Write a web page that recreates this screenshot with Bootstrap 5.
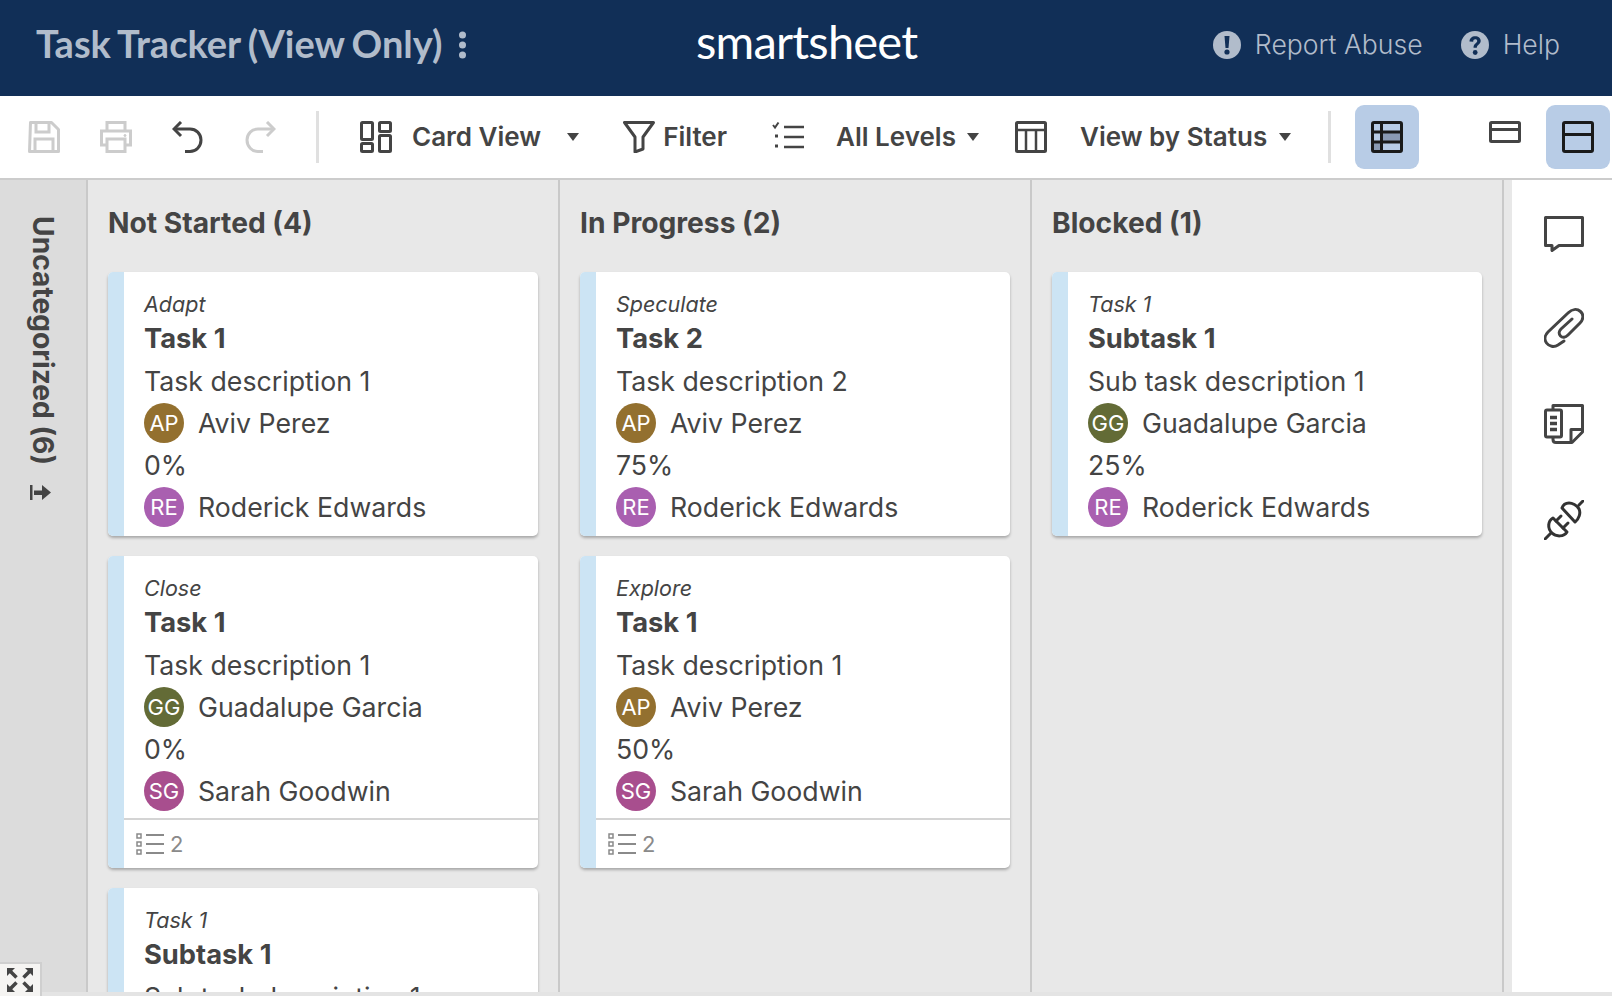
<!DOCTYPE html>
<html lang="en">
<head>
  <meta charset="UTF-8">
  <title>Task Tracker (View Only)</title>
  <meta name="viewport" content="width=device-width, initial-scale=1.0">
  <link href="https://cdn.jsdelivr.net/npm/bootstrap@5.3.3/dist/css/bootstrap.min.css" rel="stylesheet">
  <style>
    html, body { height: 100%; }
    body { background: #fff; color: #444; font-family: Inter, "Liberation Sans", sans-serif; overflow: hidden; }

    .app-header { height: 96px; padding-bottom: 6px; background: #112f57; color: #b1bccb; }
    .sheet-title { width: 696px; padding-left: 36px; font: 700 38px Lato, sans-serif; word-spacing: -2px; }
    .sheet-title span { margin-top: -4px; }
    .kebab { margin-left: 16px; }
    .logo-text { color: #fff; font: 400 47px/1 Lato, sans-serif; letter-spacing: -.8px; margin-top: -8px; }
    .head-links { padding-right: 52px; font-size: 26.6px; font-weight: 300; gap: 38px; }
    .head-link { gap: 14px; }

    .tool-bar { height: 84px; padding-left: 28px; border-bottom: 2px solid #ccc; font-size: 26px; font-weight: 600; }
    .tool-bar svg { flex: none; }
    .tool-text { margin-top: -2px; }
    .ml-40 { margin-left: 40px; }
    .tool-sep { width: 3px; height: 52px; background: #e0e0e0; margin-left: 40px; }
    .ml-cardview { margin-left: 41px; }
    .ml-20 { margin-left: 20px; }
    .ml-26 { margin-left: 26px; }
    .ml-filter { margin-left: 44px; }
    .ml-8 { margin-left: 8px; }
    .ml-list { margin-left: 45px; }
    .ml-32 { margin-left: 32px; }
    .ml-33 { margin-left: 33px; }
    .ml-11 { margin-left: 11px; }
    .ml-table { margin-left: 36px; }
    .ml-12 { margin-left: 12px; }
    .ml-37 { margin-left: 37px; }
    .ml-rows { margin-left: 70px; }
    .ml-24 { margin-left: 24px; }
    .ml-25 { margin-left: 25px; }
    .tool-on { width: 64px; height: 64px; border-radius: 9px; background: #b8cce6; }
    .caret-down { width: 0; height: 0; border-left: 6px solid transparent; border-right: 6px solid transparent; border-top: 8px solid #444; }
    .row-icon { margin-top: -10px; }

    .board { height: 812px; overflow: hidden; }
    .side-lane { width: 86px; background: #dcdcdc; padding-top: 36px; font-size: 28.2px; font-weight: 700; }
    .side-label { writing-mode: vertical-rl; line-height: 1; }
    .side-arrow { margin-top: 20px; margin-right: 6px; }
    .lane { width: 472px; background: #e8e8e8; border-left: 2px solid #c9c9c9; padding-left: 20px; }
    .lane-end { width: 10px; background: #e8e8e8; border-left: 2px solid #c9c9c9; }
    .lane-title { height: 92px; padding-bottom: 4px; font-size: 28.2px; font-weight: 700; margin: 0; }
    .task-card { width: 430px; margin-bottom: 20px; border-radius: 5px; box-shadow: 0 2px 3px rgba(0,0,0,.28); overflow: hidden; color: #444; }
    .task-bar { width: 16px; background: #cce4f4; flex: none; }
    .task-body { padding: 18px 10px 8px 20px; font-size: 26.7px; line-height: 42px; }
    .with-foot .task-body { padding-bottom: 6px; }
    .task-cat { font-size: 21.5px; font-style: italic; line-height: 28px; }
    .task-name { font-size: 27.3px; font-weight: 700; line-height: 42px; }
    .person { gap: 14px; height: 42px; }
    .avatar { width: 40px; height: 40px; border-radius: 50%; color: #fff; font-size: 22px; line-height: 40px; text-align: center; flex: none; }
    .av-ap { background: #93702f; }
    .av-re { background: #a95fb0; }
    .av-gg { background: #636b36; }
    .av-sg { background: #a84e8e; }
    .task-foot { height: 50px; border-top: 2px solid #d4d4d4; padding-left: 12px; color: #8a8a8a; font-size: 22px; gap: 6px; }

    .side-panel { width: 100px; background: #fff; padding: 32px 0 0 32px; gap: 56px; }

    .scroll-strip { height: 4px; background: #e4e4e4; }
    .expand-box { position: absolute; left: 0; top: 962px; width: 42px; height: 34px; background: #f5f4f2; border: 2px solid #cfcfcf; border-left: 0; border-bottom: 0; }
  </style>
</head>
<body>

<header class="app-header d-flex align-items-center">
  <div class="sheet-title d-flex align-items-center">
    <span>Task Tracker (View Only)</span>
    <svg class="kebab" width="9" height="28" viewBox="0 0 9 28"><g fill="#b1bccb"><circle cx="4.5" cy="4" r="3.5"/><circle cx="4.5" cy="14" r="3.5"/><circle cx="4.5" cy="24" r="3.5"/></g></svg>
  </div>
  <div class="logo-text">smartsheet</div>
  <div class="head-links ms-auto d-flex align-items-center">
    <div class="head-link d-flex align-items-center">
      <svg width="28" height="28" viewBox="0 0 28 28"><circle cx="14" cy="14" r="14" fill="#b1bccb"/><path d="M11.5 5h5l-1 12h-3z" fill="#112f57"/><circle cx="14" cy="21" r="2.600" fill="#112f57"/></svg>
      <span>Report Abuse</span>
    </div>
    <div class="head-link d-flex align-items-center">
      <svg width="28" height="28" viewBox="0 0 28 28"><circle cx="14" cy="14" r="14" fill="#b1bccb"/><path d="M8.500 10.500c0-3.300 2.500-5.300 5.700-5.300s5.500 1.900 5.500 4.600c0 3.900-3.900 3.800-3.900 7h-3.300c0-4.600 3.700-4.600 3.700-6.800 0-1.100-.8-1.700-1.900-1.700-1.300 0-2 .8-2.100 2.400z" fill="#112f57"/><circle cx="14.200" cy="21.500" r="2.400" fill="#112f57"/></svg>
      <span>Help</span>
    </div>
  </div>
</header>

<nav class="tool-bar d-flex align-items-center">
  <svg width="32" height="32" viewBox="0 0 32 32" fill="none" stroke="#ccc" stroke-width="3"><path d="M2.500 1.500h21l7 7v22h-29z" stroke-linejoin="round"/><path d="M8 2v9h13V2M7 31V18h18v13"/></svg>
  <svg class="ml-40" width="32" height="32" viewBox="0 0 32 32" fill="none" stroke="#ccc" stroke-width="3"><path d="M7 10V1.500h18V10M7 24H1.500V10h29v14H25"/><path d="M7 18h18v12.500H7z"/><circle cx="25" cy="14.500" r="1" fill="#ccc" stroke-width="1"/></svg>
  <svg class="ml-40" width="32" height="32" viewBox="0 0 32 32" fill="none" stroke="#444" stroke-width="3"><path d="M9 1 2 8l7 7"/><path d="M3 8h15c6 0 11 4.500 11 11s-5 11.500-11 11.500h-5"/></svg>
  <svg class="ml-40" width="32" height="32" viewBox="0 0 32 32" fill="none" stroke="#ccc" stroke-width="3"><path d="m23 1 7 7-7 7"/><path d="M29 8H14C8 8 3 12.500 3 19s5 11.500 11 11.500h5"/></svg>
  <div class="tool-sep"></div>
  <svg class="ml-cardview" width="32" height="32" viewBox="0 0 32 32" fill="none" stroke="#444" stroke-width="3"><rect x="1.500" y="1.500" width="11" height="17" rx="1"/><rect x="19.500" y="1.500" width="11" height="9" rx="1"/><rect x="1.500" y="22.500" width="11" height="8" rx="1"/><rect x="19.500" y="14.500" width="11" height="16" rx="1"/></svg>
  <span class="ml-20 tool-text">Card View</span>
  <span class="caret-down ml-26"></span>
  <svg class="ml-filter" width="32" height="32" viewBox="0 0 32 32" fill="none" stroke="#444" stroke-width="3" stroke-linejoin="round"><path d="M1.500 1.500h29L20 16v12l-8 3V16z"/></svg>
  <span class="ml-8 tool-text">Filter</span>
  <svg class="ml-list" width="32" height="32" viewBox="0 0 32 32" fill="none" stroke="#444" stroke-width="2.500"><path d="M12 6h20M12 16h20M12 26h20"/><path d="m1 4 2 2.500L6.500 1.500" stroke-width="2"/><path d="M3 15h3M3 25h3" stroke-width="3"/></svg>
  <span class="ml-32 tool-text">All Levels</span>
  <span class="caret-down ml-11"></span>
  <svg class="ml-table" width="32" height="32" viewBox="0 0 32 32" fill="none" stroke="#444" stroke-width="3"><rect x="1.500" y="1.500" width="29" height="29" rx="1"/><path d="M1.500 9h29M11 9v21M21 9v21" stroke-width="2.500"/></svg>
  <span class="ml-33 tool-text">View by Status</span>
  <span class="caret-down ml-12"></span>
  <div class="tool-sep ml-37"></div>
  <button class="tool-on btn p-0 border-0 d-flex align-items-center justify-content-center ml-24" type="button" aria-label="Grid">
    <svg width="32" height="32" viewBox="0 0 32 32" fill="none"><path d="M11 11h20v10H11zM2 21h9v9H2z" fill="#8a9ab3"/><rect x="1.500" y="1.500" width="29" height="29" rx="1.500" stroke="#1a1a1a" stroke-width="3"/><path d="M1.500 11h29M1.500 21h29M10.500 1.500v29" stroke="#1a1a1a" stroke-width="3"/></svg>
  </button>
  <svg class="row-icon ml-rows" width="32" height="22" viewBox="0 0 32 22" fill="none" stroke="#444" stroke-width="3"><rect x="1.500" y="1.500" width="29" height="19" rx="1"/><path d="M1.500 8.500h29"/></svg>
  <button class="tool-on btn p-0 border-0 d-flex align-items-center justify-content-center ml-25" type="button" aria-label="Split">
    <svg width="32" height="32" viewBox="0 0 32 32" fill="none" stroke="#1a1a1a" stroke-width="3"><rect x="1.500" y="1.500" width="29" height="29" rx="1.500"/><path d="M1.500 13.500h29"/></svg>
  </button>
</nav>

<main class="board d-flex">
  <aside class="side-lane d-flex flex-column align-items-center">
    <span class="side-label">Uncategorized (6)</span>
    <svg class="side-arrow" width="21" height="15" viewBox="0 0 21 15" fill="#444"><rect width="2.500" height="15"/><rect x="4" y="5.500" width="10" height="4.500"/><path d="M12 0l9 7.500-9 7.500z"/></svg>
  </aside>

  <section class="lane">
    <h2 class="lane-title d-flex align-items-center">Not Started (4)</h2>

    <article class="card task-card border-0 flex-row">
      <div class="task-bar"></div>
      <div class="flex-grow-1">
        <div class="task-body">
          <div class="task-cat">Adapt</div>
          <div class="task-name">Task 1</div>
          <div>Task description 1</div>
          <div class="person d-flex align-items-center"><span class="avatar av-ap">AP</span>Aviv Perez</div>
          <div>0%</div>
          <div class="person d-flex align-items-center"><span class="avatar av-re">RE</span>Roderick Edwards</div>
        </div>
      </div>
    </article>

    <article class="card task-card with-foot border-0 flex-row">
      <div class="task-bar"></div>
      <div class="flex-grow-1">
        <div class="task-body">
          <div class="task-cat">Close</div>
          <div class="task-name">Task 1</div>
          <div>Task description 1</div>
          <div class="person d-flex align-items-center"><span class="avatar av-gg">GG</span>Guadalupe Garcia</div>
          <div>0%</div>
          <div class="person d-flex align-items-center"><span class="avatar av-sg">SG</span>Sarah Goodwin</div>
        </div>
        <div class="task-foot d-flex align-items-center">
          <svg width="28" height="24" viewBox="0 0 28 24" fill="none" stroke="#8a8a8a"><path d="M1 2h4v4H1zM1 10h4v4H1zM1 18h4v4H1z" stroke-width="1.500"/><path d="M10 3h18M10 12h18M10 21h18" stroke-width="1.800"/></svg>
          <span>2</span>
        </div>
      </div>
    </article>

    <article class="card task-card border-0 flex-row">
      <div class="task-bar"></div>
      <div class="flex-grow-1">
        <div class="task-body">
          <div class="task-cat">Task 1</div>
          <div class="task-name">Subtask 1</div>
          <div>Sub task description 1</div>
        </div>
      </div>
    </article>
  </section>

  <section class="lane">
    <h2 class="lane-title d-flex align-items-center">In Progress (2)</h2>

    <article class="card task-card border-0 flex-row">
      <div class="task-bar"></div>
      <div class="flex-grow-1">
        <div class="task-body">
          <div class="task-cat">Speculate</div>
          <div class="task-name">Task 2</div>
          <div>Task description 2</div>
          <div class="person d-flex align-items-center"><span class="avatar av-ap">AP</span>Aviv Perez</div>
          <div>75%</div>
          <div class="person d-flex align-items-center"><span class="avatar av-re">RE</span>Roderick Edwards</div>
        </div>
      </div>
    </article>

    <article class="card task-card with-foot border-0 flex-row">
      <div class="task-bar"></div>
      <div class="flex-grow-1">
        <div class="task-body">
          <div class="task-cat">Explore</div>
          <div class="task-name">Task 1</div>
          <div>Task description 1</div>
          <div class="person d-flex align-items-center"><span class="avatar av-ap">AP</span>Aviv Perez</div>
          <div>50%</div>
          <div class="person d-flex align-items-center"><span class="avatar av-sg">SG</span>Sarah Goodwin</div>
        </div>
        <div class="task-foot d-flex align-items-center">
          <svg width="28" height="24" viewBox="0 0 28 24" fill="none" stroke="#8a8a8a"><path d="M1 2h4v4H1zM1 10h4v4H1zM1 18h4v4H1z" stroke-width="1.500"/><path d="M10 3h18M10 12h18M10 21h18" stroke-width="1.800"/></svg>
          <span>2</span>
        </div>
      </div>
    </article>
  </section>

  <section class="lane">
    <h2 class="lane-title d-flex align-items-center">Blocked (1)</h2>

    <article class="card task-card border-0 flex-row">
      <div class="task-bar"></div>
      <div class="flex-grow-1">
        <div class="task-body">
          <div class="task-cat">Task 1</div>
          <div class="task-name">Subtask 1</div>
          <div>Sub task description 1</div>
          <div class="person d-flex align-items-center"><span class="avatar av-gg">GG</span>Guadalupe Garcia</div>
          <div>25%</div>
          <div class="person d-flex align-items-center"><span class="avatar av-re">RE</span>Roderick Edwards</div>
        </div>
      </div>
    </article>
  </section>

  <div class="lane-end"></div>

  <aside class="side-panel d-flex flex-column">
    <svg width="40" height="40" viewBox="0 0 40 40" fill="none" stroke="#444" stroke-width="3" stroke-linejoin="round"><path d="M1.500 5.500h37v28H15l-7 5v-5H1.500z"/></svg>
    <svg width="40" height="40" viewBox="0 0 40 40" fill="none" stroke="#444" stroke-width="3" stroke-linecap="round"><path d="M20 33l-6 4c-4 2.500-9 1.500-11.500-2S1 27 4 24L24 5c4-4 9-4.500 12.500-1.500S39.500 11.500 36 15L24 27c-2.500 2.500-5.500 3-7.500 1s-1.500-5 .5-7L28 11"/></svg>
    <svg width="40" height="40" viewBox="0 0 40 40" fill="none" stroke="#444" stroke-width="3" stroke-linejoin="round"><path d="M9 6V1.500h29.500V28L28 38.500H12c-1.500 0-3-1-3-3V33"/><path d="M38.500 25.500H27v13"/><rect x="1.500" y="6" width="16" height="27" rx="1.500"/><path d="M6 13.500h7M6 19.500h7M6 25.500h7" stroke-width="3.500"/></svg>
    <svg width="40" height="40" viewBox="0 0 40 40" fill="none" stroke="#333" stroke-width="3" stroke-linejoin="round" stroke-linecap="round"><path d="M1 39l6-6M35 5l5-5"/><path d="M9 18l14 14c-3 5-11 5-15 1C3 28 4 21 9 18z"/><path d="M12 21l5-5M19 28l5-5"/><path d="M18 8l13 14c4-3 6-9 4-13-2-4-7-6-10-6-4 0-6 2-7 5z"/></svg>
  </aside>
</main>

<div class="scroll-strip"></div>

<div class="expand-box d-flex align-items-center justify-content-center">
  <svg width="26" height="24" viewBox="0 0 26 24" fill="#444"><path d="M0 0h8L0 8zM26 0h-8l8 8zM0 24h8L0 16zM26 24h-8l8-8z"/><path d="M3 3l6.500 6.500M23 3l-6.500 6.500M3 21l6.500-6.500M23 21l-6.500-6.500" stroke="#444" stroke-width="3.500"/></svg>
</div>

<script src="https://cdn.jsdelivr.net/npm/bootstrap@5.3.3/dist/js/bootstrap.bundle.min.js"></script>
</body>
</html>
